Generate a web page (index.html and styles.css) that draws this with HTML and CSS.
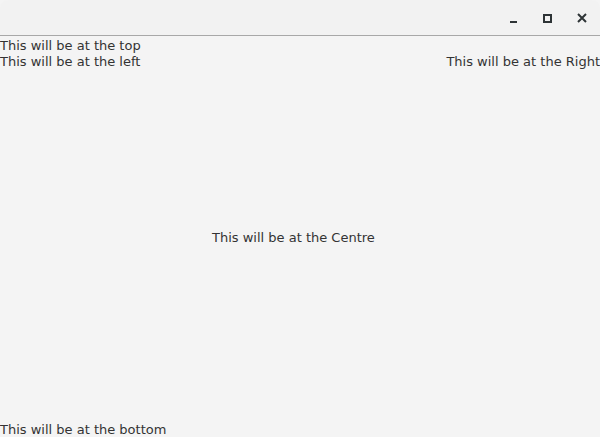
FILE: index.html
```html
<!DOCTYPE html>
<html>
<head>
<meta charset="utf-8">
<link rel="stylesheet" href="styles.css">
</head>
<body>
<div class="window">
  <div class="titlebar">
    <div class="controls">
      <span class="btn"><svg width="12" height="12" viewBox="0 0 12 12"><rect x="2" y="9" width="7" height="2" fill="#2e3436"/></svg></span>
      <span class="btn"><svg width="12" height="12" viewBox="0 0 12 12"><rect x="2" y="3" width="7" height="7" fill="none" stroke="#2e3436" stroke-width="2"/></svg></span>
      <span class="btn"><svg width="12" height="12" viewBox="0 0 12 12"><path d="M2 2L10 10M10 2L2 10" stroke="#2e3436" stroke-width="2"/></svg></span>
    </div>
  </div>
  <div class="content">
    <div class="label top">This will be at the top</div>
    <div class="middle">
      <div class="label side">This will be at the left</div>
      <div class="centre"><span class="label">This will be at the Centre</span></div>
      <div class="label side">This will be at the Right</div>
    </div>
    <div class="label bottom">This will be at the bottom</div>
  </div>
</div>
</body>
</html>
```
FILE: styles.css
```css
html, body {
  margin: 0;
  padding: 0;
  background: #f4f4f4;
}
.window {
  width: 600px;
  height: 437px;
  display: flex;
  flex-direction: column;
  overflow: hidden;
}
.titlebar {
  height: 35px;
  flex: none;
  background: #f2f2f2;
  border-bottom: 1px solid #a8a8a8;
  border-top-right-radius: 8px;
  border-top-left-radius: 8px;
  display: flex;
  justify-content: flex-end;
  align-items: center;
}
.controls {
  display: flex;
  gap: 22px;
  padding-right: 12px;
  padding-top: 1px;
}
.btn {
  width: 12px;
  height: 12px;
  display: block;
}
.btn svg { display: block; }
.content {
  flex: 1;
  display: flex;
  flex-direction: column;
  background: #f4f4f4;
  overflow: hidden;
}
.label {
  font-family: "DejaVu Sans", sans-serif;
  font-size: 13px;
  line-height: 16px;
  color: #333333;
  white-space: nowrap;
}
.top {
  padding-top: 2px;
  flex: none;
}
.bottom {
  flex: none;
  height: 15px;
  padding-top: 1px;
}
.middle {
  flex: 1;
  display: flex;
  align-items: stretch;
}
.centre {
  flex: 1;
  display: flex;
  align-items: center;
  justify-content: center;
}
```
